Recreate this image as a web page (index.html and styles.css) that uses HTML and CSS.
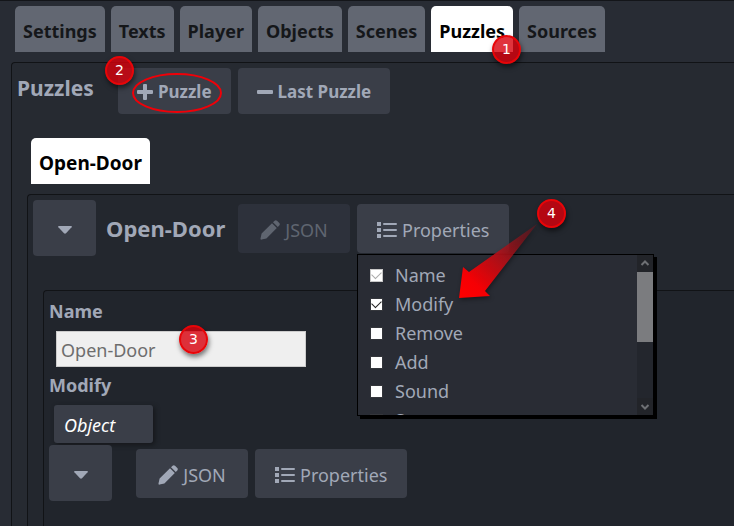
FILE: index.html
```html
<!DOCTYPE html>
<html lang="en">
<head>
<meta charset="utf-8">
<title>Puzzles</title>
<link rel="stylesheet" href="styles.css">
</head>
<body>
<svg class="defs" aria-hidden="true">
  <symbol id="pencil" viewBox="0 0 20 20"><path d="M12 3.2 16.8 8 6.4 18.4 1.6 19.6Q.3 19.8.5 18.4L1.6 13.6ZM13 2.2 14.6.7Q15.8-.3 17 .7L19.3 3Q20.3 4.200 19.3 5.400L17.800 7Z"/></symbol>
  <symbol id="list" viewBox="0 0 20 16"><path d="M0 0h4v4H0zM0 6h4v4H0zM0 12h4v4H0zM7 1h12q1 0 1 1t-1 1H7q-1 0-1-1t1-1zM7 7h12q1 0 1 1t-1 1H7q-1 0-1-1t1-1zM7 13h12q1 0 1 1t-1 1H7q-1 0-1-1t1-1z"/></symbol>
  <symbol id="plus" viewBox="0 0 16 16"><path d="M7 0h2q1 0 1 1v5h5q1 0 1 1v2q0 1-1 1h-5v5q0 1-1 1H7q-1 0-1-1v-5H1q-1 0-1-1V7q0-1 1-1h5V1q0-1 1-1z"/></symbol>
  <symbol id="minus" viewBox="0 0 16 16"><path d="M1 6h14q1 0 1 1v2q0 1-1 1H1q-1 0-1-1V7q0-1 1-1z"/></symbol>
  <symbol id="caret" viewBox="0 0 14 8"><path d="M1 0h12q1.500.200.600 1.300L8 7.300q-1 .900-2 0L.400 1.300Q-.500.200 1 0z"/></symbol>
</svg>
<main class="app">
  <nav class="tabs">
    <button class="tab">Settings</button>
    <button class="tab">Texts</button>
    <button class="tab">Player</button>
    <button class="tab">Objects</button>
    <button class="tab">Scenes</button>
    <button class="tab active">Puzzles<span class="callout one">1</span></button>
    <button class="tab">Sources</button>
  </nav>
  <section class="panel outer">
    <header class="bar top">
      <h1 class="title">Puzzles</h1>
      <div class="group">
        <button class="btn strong"><svg class="sign"><use href="#plus"/></svg>Puzzle</button>
        <svg class="ring" viewBox="0 0 92 42" aria-hidden="true"><ellipse cx="46" cy="21" rx="44" ry="19"/></svg>
        <span class="callout two">2</span>
      </div>
      <button class="btn strong"><svg class="sign"><use href="#minus"/></svg>Last Puzzle</button>
    </header>
    <nav class="tabs sub">
      <button class="tab active">Open-Door</button>
    </nav>
    <section class="panel middle">
      <header class="bar">
        <button class="btn toggle" aria-label="Collapse"><svg class="caret"><use href="#caret"/></svg></button>
        <h2 class="title name">Open-Door</h2>
        <button class="btn json" disabled><svg class="pencil"><use href="#pencil"/></svg>JSON</button>
        <div class="group">
          <button class="btn"><svg class="list"><use href="#list"/></svg>Properties</button>
          <div class="menu">
            <div class="options">
              <label class="option"><input type="checkbox" checked disabled>Name</label>
              <label class="option"><input type="checkbox" checked>Modify</label>
              <label class="option"><input type="checkbox">Remove</label>
              <label class="option"><input type="checkbox">Add</label>
              <label class="option"><input type="checkbox">Sound</label>
              <label class="option"><input type="checkbox">Score</label>
            </div>
            <div class="scroll" aria-hidden="true">
              <svg class="arrow" viewBox="0 0 15 17"><path d="M4 10 7.500 6.500 11 10"/></svg>
              <div class="thumb"></div>
              <svg class="arrow" viewBox="0 0 15 17"><path d="M4 7 7.500 10.500 11 7"/></svg>
            </div>
          </div>
          <svg class="pointer" viewBox="0 0 90 80" aria-hidden="true">
            <defs><linearGradient id="fade" x1="0" y1="1" x2="1" y2="0"><stop offset="0" stop-color="#f00"/><stop offset=".2" stop-color="#f50004"/><stop offset=".55" stop-color="#b51018" stop-opacity=".9"/><stop offset="1" stop-color="#70141c" stop-opacity=".5"/></linearGradient></defs>
            <path d="M4 76 8 45 14 50 82 2 30 69 35 74Z" fill="url(#fade)"/>
          </svg>
          <span class="callout four">4</span>
        </div>
      </header>
      <section class="panel inner">
        <label class="label" for="name">Name</label>
        <div class="field">
          <input class="text" id="name" type="text" value="Open-Door">
          <span class="callout three">3</span>
        </div>
        <h3 class="label">Modify</h3>
        <div class="chip">Object</div>
        <div class="bar">
          <button class="btn toggle" aria-label="Collapse"><svg class="caret"><use href="#caret"/></svg></button>
          <span class="spacer"></span>
          <button class="btn json"><svg class="pencil"><use href="#pencil"/></svg>JSON</button>
          <button class="btn"><svg class="list"><use href="#list"/></svg>Properties</button>
        </div>
      </section>
    </section>
  </section>
</main>
</body>
</html>
```

FILE: styles.css
```css
* { box-sizing: border-box; }
body {
  margin: 0;
  background: #282c34;
  color: #a1a8b7;
  font-family: "Noto Sans", "Open Sans", sans-serif;
  font-size: 18px;
  line-height: 24px;
  overflow: hidden;
}
button, input { font: inherit; }
.defs { position: absolute; width: 0; height: 0; }
.app {
  min-height: 100vh;
  border-top: 1px solid #131519;
  padding: 5px 0 0 11px;
}
.tabs { display: flex; gap: 6px; padding-left: 4px; }
.tab {
  position: relative;
  height: 46px;
  padding: 3px 8px 0;
  border: 0;
  border-radius: 5px 5px 0 0;
  background: #626772;
  color: #15171a;
  font-size: 18px;
  font-weight: 700;
}
.tab.active { background: #fff; color: #000; }
.panel {
  border: 1px solid #111316;
  border-right: 0;
  border-bottom: 0;
  border-radius: 4px 0 0 0;
  padding: 5px 0 0 5px;
}
.outer { margin-top: 10px; background: #262a31; min-height: 464px; }
.middle { margin: 10px 0 0 10px; background: #23272e; min-height: 332px; }
.inner { margin: 34px 0 0 10px; background: #21252c; min-height: 236px; }
.bar { display: flex; align-items: center; gap: 7px; }
.top { align-items: stretch; }
.sub { margin-top: 24px; padding-left: 14px; }
.sub .tab { font-size: 19px; }
.title { margin: 0; font-size: 21px; font-weight: 700; line-height: 40px; }
.top .title { min-width: 94px; }
.name { min-width: 128px; padding-left: 3px; font-size: 22px; }
.spacer { width: 10px; }
.group { position: relative; }
.btn {
  display: flex;
  align-items: center;
  justify-content: center;
  gap: 5px;
  height: 49px;
  padding: 3px 20px 0;
  border: 0;
  border-radius: 4px;
  background: #3a3e48;
  color: #a1a8b7;
}
.btn:disabled { background: #2d313b; color: #5f6570; }
.btn.strong { height: 46px; padding: 1px 19px 0; font-size: 17px; font-weight: 700; }
.btn.json { min-width: 112px; }
.btn.toggle { width: 63px; height: 56px; }
.btn svg { fill: currentColor; flex: none; }
.sign { width: 16px; height: 16px; }
.pencil { width: 20px; height: 20px; }
.list { width: 20px; height: 16px; }
.caret { width: 14px; height: 8px; }
.label { display: block; margin: 0; font-size: 18px; font-weight: 700; line-height: 30px; }
.field { position: relative; width: 250px; margin: 5px 0 3px 7px; }
.text {
  display: block;
  width: 100%;
  height: 36px;
  padding: 2px 4px 0;
  border: 1px solid #ccc;
  background: #efefef;
  color: #6d6d6d;
}
.chip {
  width: 99px;
  height: 38px;
  margin: 5px 0 2px 5px;
  padding: 0 10px;
  border-radius: 3px;
  background: #3a3e48;
  box-shadow: 2px 2px 5px #15171b;
  color: #fff;
  font-style: italic;
  line-height: 40px;
}
.menu {
  position: absolute;
  z-index: 1;
  top: 50px;
  left: 0;
  display: flex;
  width: 297px;
  height: 162px;
  border: 1px solid #000;
  background: #292c34;
  box-shadow: 3px 3px #000;
  overflow: hidden;
}
.options { flex: 1; padding: 6px 0 0 12px; }
.option { display: flex; align-items: center; gap: 12px; height: 29px; }
.option input {
  appearance: none;
  display: grid;
  place-items: center;
  width: 13px;
  height: 13px;
  margin: 0;
  border: 1px solid #34363b;
  background: #fff;
}
.option input:checked::after {
  content: "";
  width: 8px;
  height: 5px;
  margin-top: -3px;
  border: solid #222;
  border-width: 0 0 1px 1px;
  transform: rotate(-45deg);
}
.option input:disabled { border-color: #c8c8c8; }
.option input:disabled::after { border-color: #aaa; }
.scroll { display: flex; flex-direction: column; width: 16px; background: #23262d; }
.arrow { width: 16px; height: 17px; background: #222429; fill: none; stroke: #6e7074; stroke-width: 2; }
.thumb { height: 70px; margin-bottom: auto; background: #7b7c7f; }
.callout {
  position: absolute;
  z-index: 3;
  width: 29px;
  height: 29px;
  border: 2px solid #e80508;
  border-radius: 50%;
  background: #d8000bcc;
  box-shadow: 1px 3px 5px #0008;
  color: #fff;
  font-family: "DejaVu Sans", sans-serif;
  font-size: 14px;
  font-weight: 400;
  line-height: 25px;
  text-align: center;
}
.one { right: -8px; bottom: -12px; }
.two { left: -13px; top: -12px; }
.three { left: 123px; top: -6px; }
.four { left: 180px; top: -5px; }
.ring { position: absolute; left: 13px; top: 4px; width: 92px; height: 42px; fill: none; stroke: #f00008; stroke-width: 2; }
.pointer { position: absolute; z-index: 2; left: 98px; top: 18px; width: 90px; height: 80px; filter: drop-shadow(1px 2px 2px #0006); }
```
